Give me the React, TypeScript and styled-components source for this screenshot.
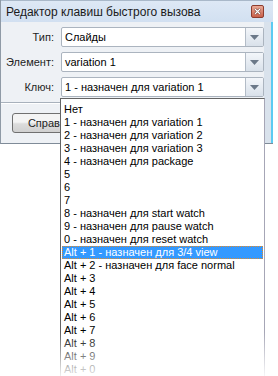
import styled, { createGlobalStyle } from "styled-components";

const GlobalStyle = createGlobalStyle`
  html, body {
    margin: 0;
    padding: 0;
    background: #ffffff;
  }
  body {
    font-family: "Liberation Sans", Arial, sans-serif;
    font-size: 11px;
    color: #000;
  }
`;

const Screen = styled.div`
  position: relative;
  width: 278px;
  height: 376px;
  overflow: hidden;
`;

const Window = styled.div`
  width: 273px;
  height: 144px;
  display: flex;
  flex-direction: column;
  box-sizing: border-box;
  border-left: 1px solid #8f9aa6;
  border-bottom: 1px solid #7f8b98;
`;

const TitleBar = styled.div`
  height: 22px;
  display: flex;
  align-items: center;
  justify-content: space-between;
  padding: 0 9px 0 5px;
  background: linear-gradient(#dde8f5, #d2e0f1);
  border-top: 1px solid #a9b8c9;
  box-sizing: border-box;
`;

const Title = styled.span`
  font-size: 12px;
  color: #1b1b1b;
`;

const CloseButton = styled.div`
  width: 11px;
  height: 11px;
  border: 1px solid #8d3d2f;
  border-radius: 2px;
  background: linear-gradient(#e9aa98, #c9604a);
  display: flex;
  align-items: center;
  justify-content: center;
`;

const Frame = styled.div`
  flex: 1;
  display: flex;
`;

const Body = styled.div`
  flex: 1;
  display: flex;
  flex-direction: column;
  background: #eef1f5;
  padding-top: 5px;
`;

const RightEdge = styled.div`
  width: 7px;
  background: #d9e2ec;
  border-right: 2px solid #5ccbf2;
`;

const Form = styled.div`
  display: grid;
  grid-template-columns: 53px 1fr;
  column-gap: 7px;
  row-gap: 5px;
`;

const Label = styled.span`
  text-align: right;
  align-self: center;
  color: #1e1e1e;
`;

const Combo = styled.div`
  height: 20px;
  display: flex;
  box-sizing: border-box;
  border: 1px solid #abb4bf;
  border-radius: 2px;
  background: #fff;
`;

const ComboText = styled.span`
  flex: 1;
  padding-left: 3px;
  line-height: 18px;
`;

const ArrowButton = styled.div`
  width: 17px;
  display: flex;
  align-items: center;
  justify-content: center;
  border-left: 1px solid #b3bcc7;
  background: linear-gradient(#f3f6fa, #d9e1ea);
`;

const Separator = styled.div`
  margin-top: 5px;
  height: 0;
  border-top: 1px solid #a8b1bc;
  border-bottom: 1px solid #ffffff;
`;

const Footer = styled.div`
  padding: 9px 0 0 11px;
`;

const Button = styled.div`
  width: 75px;
  height: 20px;
  box-sizing: border-box;
  border: 1px solid #707070;
  border-radius: 3px;
  background: linear-gradient(#f4f4f4 45%, #dcdcdc 55%, #d0d0d0);
  line-height: 18px;
  text-align: center;
  color: #1e1e1e;
`;

const DropList = styled.div`
  position: absolute;
  left: 60px;
  top: 98px;
  width: 205px;
  height: 300px;
  box-sizing: border-box;
  border: 1px solid #646464;
  border-right-color: #a6a6b6;
  background: #fff;
  padding: 4px 1px 2px;
`;

const Item = styled.div<{ $selected?: boolean }>`
  height: 13px;
  line-height: 13px;
  padding-left: 2px;
  white-space: nowrap;
  box-sizing: border-box;
  background: ${(p) => (p.$selected ? "#3399ff" : "transparent")};
  color: ${(p) => (p.$selected ? "#fff" : "#000")};
  outline: ${(p) => (p.$selected ? "1px dotted #e08a2c" : "none")};
  outline-offset: -1px;
`;

const Fade = styled.div`
  position: absolute;
  left: 0;
  right: 0;
  bottom: 0;
  height: 44px;
  background: linear-gradient(rgba(255, 255, 255, 0), rgba(255, 255, 255, 0.9));
`;

const Arrow = () => (
  <svg width="9" height="5" viewBox="0 0 9 5">
    <path d="M0 0h9L4.5 5z" fill="#6b7888" />
  </svg>
);

const CloseIcon = () => (
  <svg width="7" height="7" viewBox="0 0 7 7">
    <path d="M1 1l5 5M6 1l-5 5" stroke="#5a2a20" strokeWidth="2.4" />
    <path d="M1 1l5 5M6 1l-5 5" stroke="#fff" strokeWidth="1.3" />
  </svg>
);

const items = [
  "Нет",
  "1 - назначен для variation 1",
  "2 - назначен для variation 2",
  "3 - назначен для variation 3",
  "4 - назначен для package",
  "5",
  "6",
  "7",
  "8 - назначен для start watch",
  "9 - назначен для pause watch",
  "0 - назначен для reset watch",
  "Alt + 1 - назначен для 3/4 view",
  "Alt + 2 - назначен для face normal",
  "Alt + 3",
  "Alt + 4",
  "Alt + 5",
  "Alt + 6",
  "Alt + 7",
  "Alt + 8",
  "Alt + 9",
  "Alt + 0",
];

const fields = [
  { label: "Тип:", value: "Слайды" },
  { label: "Элемент:", value: "variation 1" },
  { label: "Ключ:", value: "1 - назначен для variation 1" },
];

export default function App() {
  return (
    <Screen>
      <GlobalStyle />
      <Window>
        <TitleBar>
          <Title>Редактор клавиш быстрого вызова</Title>
          <CloseButton>
            <CloseIcon />
          </CloseButton>
        </TitleBar>
        <Frame>
          <Body>
            <Form>
              {fields.map((f) => [
                <Label key={f.label}>{f.label}</Label>,
                <Combo key={f.label + "c"}>
                  <ComboText>{f.value}</ComboText>
                  <ArrowButton>
                    <Arrow />
                  </ArrowButton>
                </Combo>,
              ])}
            </Form>
            <Separator />
            <Footer>
              <Button>Справка</Button>
            </Footer>
          </Body>
          <RightEdge />
        </Frame>
      </Window>
      <DropList>
        {items.map((t, i) => (
          <Item key={i} $selected={i === 11}>
            {t}
          </Item>
        ))}
      </DropList>
      <Fade />
    </Screen>
  );
}
